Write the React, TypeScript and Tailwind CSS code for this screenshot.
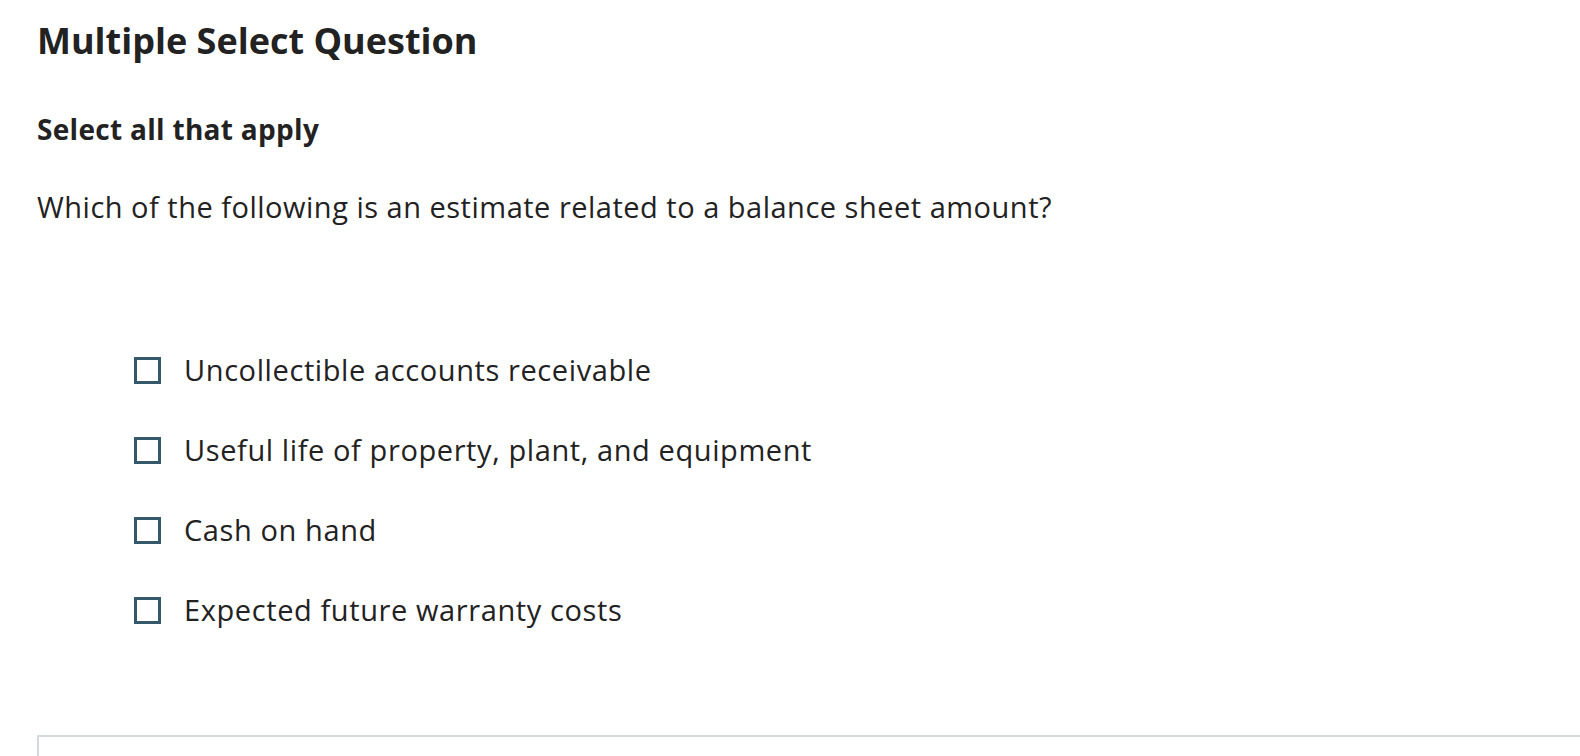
const options = [
  "Uncollectible accounts receivable",
  "Useful life of property, plant, and equipment",
  "Cash on hand",
  "Expected future warranty costs",
];

export default function App() {
  return (
    <div className="min-h-screen bg-white text-[#222] font-['Open_Sans',sans-serif] overflow-hidden">
      <div className="pl-[37px] pt-[17px]">
        <h1 className="text-[36px] leading-[48px] font-bold">Multiple Select Question</h1>
        <h2 className="mt-[46px] text-[28px] leading-[36px] font-bold tracking-[0.3px]">Select all that apply</h2>
        <p className="mt-[42px] text-[29px] leading-[36px] tracking-[0.5px]">
          Which of the following is an estimate related to a balance sheet amount?
        </p>

        <ul className="mt-[127px] pl-[97px] flex flex-col gap-[44px]">
          {options.map((opt) => (
            <li key={opt} className="flex items-center gap-[23px]">
              <span className="w-[27px] h-[27px] border-[3px] border-[#34596b] shrink-0" />
              <span className="text-[29px] leading-[36px] tracking-[0.6px]">{opt}</span>
            </li>
          ))}
        </ul>

        <div className="mt-[107px] h-[100px] w-[1700px] border-t-2 border-l-2 border-[#d3d9dc]" />
      </div>
    </div>
  );
}
